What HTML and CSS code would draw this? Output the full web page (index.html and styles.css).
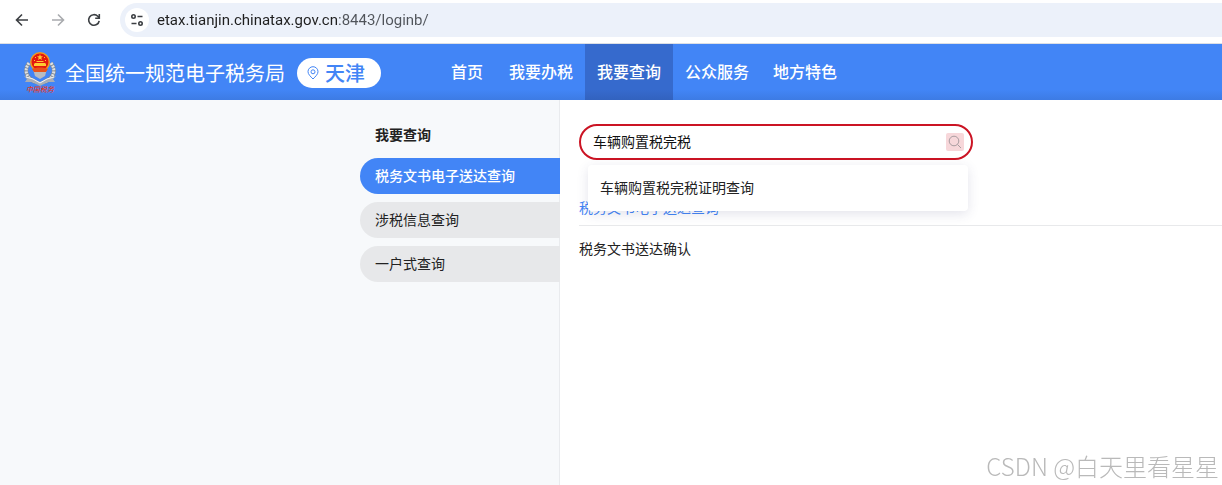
FILE: index.html
```html
<!DOCTYPE html>
<html lang="zh-CN">
<head>
    <meta charset="utf-8">
    <meta name="viewport" content="width=device-width, initial-scale=1">
    <title>全国统一规范电子税务局</title>
    <link rel="stylesheet" href="styles.css">
</head>
<body>
    <div class="toolbar">
        <button type="button" class="tool" aria-label="后退">
            <svg width="16" height="16" viewBox="0 0 16 16"><path d="M14 8H3M8 2.5L2.5 8L8 13.5"/></svg>
        </button>
        <button type="button" class="tool tool-off" aria-label="前进">
            <svg width="16" height="16" viewBox="0 0 16 16"><path d="M2 8H13M8 2.5L13.5 8L8 13.5"/></svg>
        </button>
        <button type="button" class="tool" aria-label="刷新">
            <svg width="16" height="16" viewBox="0 0 16 16"><path d="M13.2 8.8A5.3 5.3 0 1 1 11.8 4.3L13.2 5.7M13.3 2V6.2H9.2"/></svg>
        </button>
        <div class="address">
            <button type="button" class="site-info" aria-label="网站信息">
                <svg width="16" height="16" viewBox="0 0 16 16"><circle cx="4.500" cy="4.500" r="1.700"/><path d="M8.500 4.500H13.500M2.500 11.500H7.500"/><circle cx="11.500" cy="11.500" r="1.700"/></svg>
            </button>
            <input type="text" class="url" aria-label="地址" value="etax.tianjin.chinatax.gov.cn:8443/loginb/">
        </div>
    </div>

    <header class="header">
        <div class="brand">
            <svg class="logo" width="34" height="44" viewBox="0 0 34 44">
                <path d="M6 12C0 20 4 28 13 31M28 12C34 20 30 28 21 31" stroke="#7f8791" stroke-width="4"/>
                <path d="M6 12C0 20 4 28 13 31M28 12C34 20 30 28 21 31" stroke="#dfe1e4" stroke-width="3" stroke-dasharray="2 1"/>
                <path d="M1 25L9 27L17 31L25 27L33 25L30 28L32 31L25 31L17 35L9 31L2 31L4 28Z" fill="#a9aeb5"/>
                <path d="M3 26L10 28L17 32L24 28L31 26" stroke="#f3f4f5"/>
                <path d="M10 18H24L22 25L17 28L12 25Z" fill="#b9bcc0"/>
                <circle cx="17" cy="11" r="10" fill="#f39a1f"/>
                <circle cx="17" cy="11" r="8.500" fill="#e3170f"/>
                <path d="M17 3L17.800 5.200L20 5.300L18.300 6.700L18.900 9L17 7.700L15.100 9L15.700 6.700L14 5.300L16.200 5.200Z" fill="#ffc933"/>
                <path d="M12 6h1v1h-1zM21 6h1v1h-1zM11 9h1v1h-1zM22 9h1v1h-1zM13 11L14 10H20L21 11ZM11 13L12 12H22L23 13V15H11Z" fill="#ffc933"/>
                <path d="M9 18C13 16 21 16 25 18L23 21H11Z" fill="#e8541a"/>
            </svg>
            <h1 class="site-name">全国统一规范电子税务局</h1>
            <span class="logo-text">中国税务</span>
            <button type="button" class="region">
                <svg width="12" height="14" viewBox="0 0 12 14"><path d="M6 13C3.5 10.5 1 8.2 1 5.7A5 5 0 0 1 11 5.7C11 8.2 8.5 10.5 6 13Z"/><circle cx="6" cy="5.800" r="2"/></svg>
                天津
            </button>
        </div>
        <nav class="main-nav">
            <a href="#">首页</a>
            <a href="#">我要办税</a>
            <a href="#" class="active">我要查询</a>
            <a href="#">公众服务</a>
            <a href="#">地方特色</a>
        </nav>
    </header>

    <div class="page">
        <aside class="sidebar">
            <nav class="side-menu">
                <h2>我要查询</h2>
                <a href="#" class="active">税务文书电子送达查询</a>
                <a href="#">涉税信息查询</a>
                <a href="#">一户式查询</a>
            </nav>
        </aside>
        <main class="content">
            <form class="search">
                <input type="text" aria-label="搜索" value="车辆购置税完税">
                <button type="button" aria-label="查询">
                    <svg width="14" height="14" viewBox="0 0 14 14"><circle cx="6" cy="6" r="4.800"/><path d="M9.5 9.5L13 13"/></svg>
                </button>
                <ul class="suggest">
                    <li><a href="#">车辆购置税完税证明查询</a></li>
                </ul>
            </form>
            <h3 class="group-title">税务文书电子送达查询</h3>
            <a href="#" class="entry">税务文书送达确认</a>
        </main>
    </div>

    <div class="watermark">CSDN @白天里看星星</div>
</body>
</html>
```
FILE: styles.css
```css
* {
    box-sizing: border-box;
}
body {
    margin: 0;
    min-height: 100vh;
    display: flex;
    flex-direction: column;
    font: 14px/20px "Noto Sans CJK SC", sans-serif;
    color: #222;
    background: #fff;
}
a {
    color: inherit;
    text-decoration: none;
}
button {
    padding: 0;
    border: none;
    background: none;
    font: inherit;
    cursor: pointer;
}
svg {
    display: block;
    fill: none;
}

/* browser bar */
.toolbar {
    display: flex;
    align-items: center;
    gap: 20px;
    height: 44px;
    padding: 0 0 4px 14px;
    border-bottom: 1px solid #dcdfe5;
}
.tool {
    width: 16px;
}
.tool svg, .site-info svg {
    stroke: #3c3f43;
    stroke-width: 1.6;
}
.tool-off svg {
    stroke: #a9abae;
}
.address {
    display: flex;
    flex: 1;
    align-items: center;
    gap: 8px;
    height: 34px;
    margin-left: -2px;
    padding-left: 5px;
    border-radius: 17px 0 0 17px;
    background: #ecf1fa;
}
.site-info {
    display: flex;
    align-items: center;
    justify-content: center;
    width: 24px;
    height: 24px;
    border-radius: 50%;
    background: #fff;
}
.url {
    flex: 1;
    padding: 0;
    border: none;
    outline: none;
    font: 15px/20px Roboto, sans-serif;
    color: transparent;
    background: linear-gradient(90deg, #1f1f1f 182px, #50545a 182px);
    -webkit-background-clip: text;
    background-clip: text;
}

/* header */
.header {
    display: flex;
    height: 56px;
    color: #fff;
    background: linear-gradient(#4285f6 46px, #3d7be4);
}
.brand {
    position: relative;
    display: flex;
    align-items: center;
    padding: 2px 0 0 23px;
}
.logo-text {
    position: absolute;
    left: 26px;
    bottom: 7px;
    font-size: 7px;
    line-height: 8px;
    font-style: italic;
    font-weight: 500;
    color: #e5391f;
}
.site-name {
    margin: 0 12px 0 8px;
    font-size: 20px;
    line-height: 28px;
    font-weight: 400;
}
.region {
    display: flex;
    align-items: center;
    gap: 6px;
    height: 30px;
    padding: 0 16px 0 10px;
    border-radius: 15px;
    font-size: 20px;
    font-weight: 500;
    color: #4285f6;
    background: #fff;
}
.region svg {
    stroke: #4285f6;
}
.main-nav {
    display: flex;
    margin-left: 58px;
}
.main-nav a {
    padding: 0 12px 2px;
    font-size: 16px;
    line-height: 54px;
    font-weight: 500;
}
.main-nav a:first-child {
    margin-right: 2px;
}
.main-nav .active {
    background: linear-gradient(#366acd 46px, #3262be);
}

/* page */
.page {
    display: flex;
    flex: 1;
}
.sidebar {
    display: flex;
    flex: 0 0 560px;
    justify-content: flex-end;
    border-right: 1px solid #e9ebee;
    background: #f7f9fb;
}
.side-menu {
    display: flex;
    flex-direction: column;
    gap: 8px;
    width: 200px;
    margin-right: -1px;
    padding-top: 20px;
}
.side-menu h2 {
    margin: 0;
    padding: 0 0 2px 15px;
    font-size: 14px;
    line-height: 28px;
}
.side-menu a {
    padding: 0 0 2px 15px;
    line-height: 34px;
    border-radius: 18px 0 0 18px;
    background: #e7e8ea;
}
.side-menu .active {
    color: #fff;
    font-weight: 500;
    background: #4285f6;
}
.content {
    flex: 1;
    padding: 24px 0 0 19px;
}

/* search */
.search {
    position: relative;
    display: flex;
    align-items: center;
    width: 394px;
    height: 36px;
    padding: 0 7px 0 12px;
    border: 2px solid #cb1424;
    border-radius: 18px;
}
.search input {
    flex: 1;
    padding: 0 0 2px;
    border: none;
    outline: none;
    font: inherit;
    color: #111;
    background: none;
}
.search button {
    display: flex;
    align-items: center;
    justify-content: center;
    width: 18px;
    height: 18px;
    border-radius: 2px;
    background: #f7d7da;
}
.search button svg {
    stroke: #a99ca0;
}
.suggest {
    position: absolute;
    top: 39px;
    left: 7px;
    width: 380px;
    margin: 0;
    padding: 7px 0 9px;
    list-style: none;
    border-radius: 4px;
    background: #fff;
    box-shadow: 0 3px 12px rgba(60, 60, 110, .14);
}
.suggest a {
    display: block;
    padding: 0 12px;
    line-height: 30px;
}
.group-title {
    margin: 37px 0 12px;
    padding-bottom: 8px;
    border-bottom: 1px solid #e8e9eb;
    font-size: 14px;
    line-height: 20px;
    font-weight: 400;
    color: #4285f6;
}

.watermark {
    position: fixed;
    right: 3px;
    bottom: 4px;
    font-size: 24px;
    line-height: 30px;
    font-weight: 300;
    color: #b9b9b9;
}
```
